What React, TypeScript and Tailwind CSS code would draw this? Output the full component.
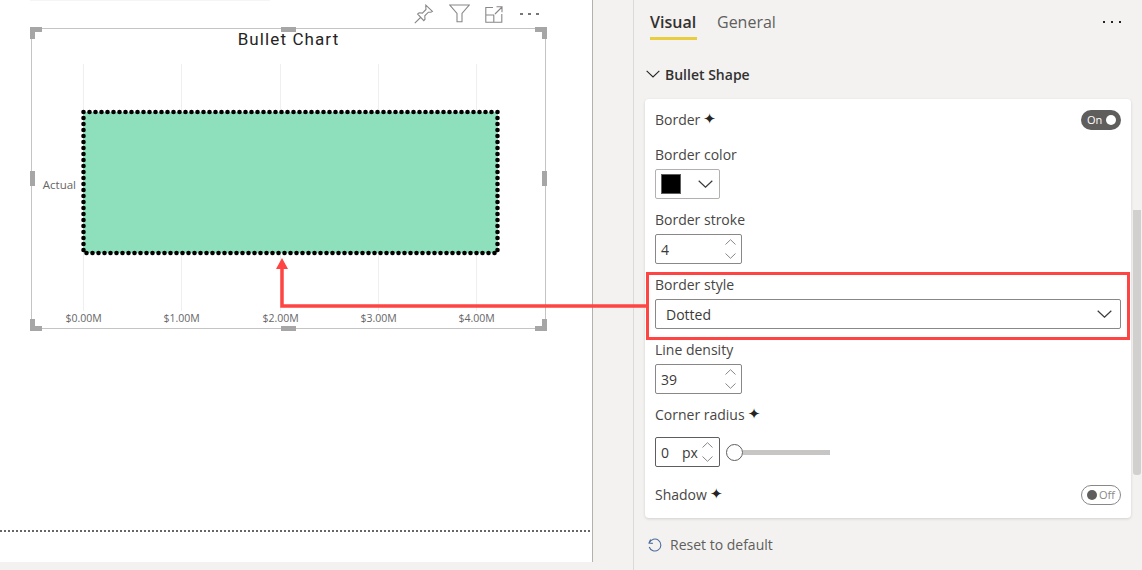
const FONT = "font-['Open_Sans','Noto_Sans',sans-serif]";

function Chevron({ w = 15, h = 8, color = "#3b3a39" }: { w?: number; h?: number; color?: string }) {
  return (
    <svg width={w} height={h} viewBox="0 0 15 8" fill="none" className="block">
      <path d="M.7.7 7.5 7.2 14.3.7" stroke={color} strokeWidth="1.2" />
    </svg>
  );
}

function SpinArrows() {
  return (
    <div className="flex flex-col items-center gap-[8px]">
      <svg width="11" height="6" viewBox="0 0 11 6" fill="none" className="block">
        <path d="M.5 5.5 5.5.7l5 4.8" stroke="#8a8886" />
      </svg>
      <svg width="11" height="6" viewBox="0 0 11 6" fill="none" className="block">
        <path d="M.5.5l5 4.8 5-4.8" stroke="#8a8886" />
      </svg>
    </div>
  );
}

function Star() {
  return <span className="font-['DejaVu_Sans',sans-serif] text-[15px] leading-none text-[#252423]">✦</span>;
}

function Label({ children }: { children: React.ReactNode }) {
  return <div className="flex h-5 items-center gap-[3px] pb-[2px] text-[14px] text-[#484644]">{children}</div>;
}

function NumberField({ value }: { value: string }) {
  return (
    <div className="mt-1 flex h-[30px] w-[87px] items-center justify-between rounded-[2px] border border-[#8a8886] pl-[5px] pr-[5px] text-[14px] text-[#3b3a39]">
      <span>{value}</span>
      <SpinArrows />
    </div>
  );
}

function Handle({ className }: { className: string }) {
  return <div className={`absolute bg-[#a6a6a6] ${className}`} />;
}

function Corner({ className, sides }: { className: string; sides: string }) {
  return <div className={`absolute h-3 w-3 border-[#a6a6a6] ${sides} ${className}`} />;
}

function Chart() {
  const ticks = [
    { x: 51, label: "$0.00M" },
    { x: 149, label: "$1.00M" },
    { x: 248, label: "$2.00M" },
    { x: 346, label: "$3.00M" },
    { x: 444, label: "$4.00M" },
  ];
  return (
    <svg width="513" height="299" viewBox="0 0 513 299" className="absolute left-0 top-0 block">
      {ticks.map((t) => (
        <line key={t.x} x1={t.x + 0.5} x2={t.x + 0.5} y1="35" y2="282" stroke="#efefef" />
      ))}
      <rect x="51.5" y="83" width="414" height="141" fill="#8de0bb" />
      <rect
        x="51.5"
        y="83"
        width="414"
        height="141"
        fill="none"
        stroke="#000"
        strokeWidth="4.6"
        strokeLinecap="round"
        strokeDasharray="0 6"
      />
      <text x="44" y="160" textAnchor="end" fontSize="11.5" fill="#666">Actual</text>
      {ticks.map((t) => (
        <text key={t.label} x={t.x + 0.5} y="293" textAnchor="middle" fontSize="10.5" fill="#666">{t.label}</text>
      ))}
    </svg>
  );
}

function ChartActions() {
  return (
    <div className="flex h-[27px] w-[515px] items-start justify-end pr-[7px] pt-[3px]">
      <svg width="20" height="20" viewBox="0 0 20 20" fill="none" stroke="#8a8886" strokeWidth="1.1" className="block">
        <path d="M.8 19.2 7 13M11.8 1.2l6.600 6.200-1.600.9-2.400-.1-3.600 3.600.2 3.400-1.200 1.400L3.600 10l1.500-1.200 3.300.3L12 5.500l-.2-2.600Z" />
      </svg>
      <svg width="21" height="19" viewBox="0 0 21 19" fill="none" stroke="#8a8886" strokeWidth="1.1" className="ml-[15px] block">
        <path d="M.8 1h19.400L13 9.500V17.800H8V9.500Z" />
      </svg>
      <svg width="18" height="17" viewBox="0 0 18 17" fill="none" stroke="#8a8886" strokeWidth="1.1" className="ml-[15px] mt-[2px] block">
        <path d="M8 1.500H.8v14.700h16V8M.8 9h8v7.200M10 8l7-7M11.500.8h5.500v5.500" />
      </svg>
      <div className="ml-[17px] mt-[9px] flex gap-[5px]">
        <span className="h-[2px] w-[3px] bg-[#777]" />
        <span className="h-[2px] w-[3px] bg-[#777]" />
        <span className="h-[2px] w-[3px] bg-[#777]" />
      </div>
    </div>
  );
}

function Canvas() {
  return (
    <div className="h-[562px] w-[593px] border-r border-[#b3b0ad] bg-white">
      <div className="ml-[30px] h-px w-[240px] bg-[#f5f5f5]" />
      <div className="ml-[31px]">
        <ChartActions />
        <div className="relative h-[301px] w-[515px] border border-[#c4c4c4]">
          <Chart />
          <div className="relative text-center font-['Roboto',sans-serif] text-[17px] leading-5 tracking-[1.1px] text-[#252423]">
            Bullet Chart
          </div>
          <Corner className="-left-[2px] -top-[2px]" sides="border-l-[5px] border-t-[5px]" />
          <Corner className="-right-[2px] -top-[2px]" sides="border-r-[5px] border-t-[5px]" />
          <Corner className="-left-[2px] -bottom-[3px]" sides="border-b-[5px] border-l-[5px]" />
          <Corner className="-bottom-[3px] -right-[2px]" sides="border-b-[5px] border-r-[5px]" />
          <Handle className="-top-[2px] left-[249px] h-[5px] w-[15px]" />
          <Handle className="-bottom-[3px] left-[249px] h-[5px] w-[15px]" />
          <Handle className="-left-[2px] top-[142px] h-[15px] w-[5px]" />
          <Handle className="-right-[2px] top-[142px] h-[15px] w-[5px]" />
        </div>
      </div>
      <div className="mt-[201px] h-0 w-[590px] border-t-2 border-dotted border-[#666]" />
    </div>
  );
}

function FormatPanel() {
  return (
    <div className="flex h-[570px] w-[509px] border-l border-[#dcdad8] bg-[#f3f2f1]">
      <div className="w-[498px]">
        <div className="flex h-[40px] items-start pl-[16px] pt-[11px] text-[16px] leading-[22px]">
          <div className="h-[29px] w-[47px] border-b-[3px] border-[#e8ce3f] font-semibold text-[#323130]">Visual</div>
          <div className="ml-[20px] text-[#605e5c]">General</div>
          <div className="ml-auto mr-[11px] mt-[10px] flex gap-[6px]">
            <span className="h-[2px] w-[2px] bg-[#252423]" />
            <span className="h-[2px] w-[2px] bg-[#252423]" />
            <span className="h-[2px] w-[2px] bg-[#252423]" />
          </div>
        </div>

        <div className="flex h-[59px] items-center gap-[5px] pl-[12px] pt-[9px] text-[14px] font-semibold text-[#323130]">
          <Chevron w={14} h={8} color="#252423" />
          Bullet Shape
        </div>

        <div className="ml-[11px] h-[419px] w-[486px] rounded-[4px] bg-white px-[10px] pt-[11px] shadow-[0_1px_3px_rgba(0,0,0,0.14)]">
          <div className="flex h-5 items-center justify-between">
            <Label>Border <Star /></Label>
            <div className="flex h-5 w-10 items-center justify-between rounded-full bg-[#605e5c] pl-[6px] pr-[5px] text-[11px] text-white">
              On
              <span className="h-[10px] w-[10px] rounded-full bg-white" />
            </div>
          </div>

          <div className="mt-[15px]">
            <Label>Border color</Label>
            <div className="mt-1 flex h-[30px] w-[65px] items-center justify-between rounded-[2px] border border-[#b3b0ad] pl-[5px] pr-[6px]">
              <span className="h-5 w-5 border border-[#605e5c] bg-black" />
              <Chevron />
            </div>
          </div>

          <div className="mt-[11px]">
            <Label>Border stroke</Label>
            <NumberField value="4" />
          </div>

          <div className="mt-[11px]">
            <Label>Border style</Label>
            <div className="mt-1 flex h-[30px] w-[466px] items-center justify-between rounded-[2px] border border-[#8a8886] pl-[10px] pr-[8px] text-[14px] text-[#3b3a39]">
              Dotted
              <Chevron />
            </div>
          </div>

          <div className="mt-[11px]">
            <Label>Line density</Label>
            <NumberField value="39" />
          </div>

          <div className="mt-[11px]">
            <Label>Corner radius <Star /></Label>
            <div className="mt-[12px] flex items-center">
              <div className="flex h-[30px] w-[65px] items-center rounded-[2px] border border-[#605e5c] pl-[5px] text-[14px] text-[#3b3a39]">
                <span className="w-[21px]">0</span>
                <span className="w-[20px]">px</span>
                <SpinArrows />
              </div>
              <span className="ml-[6px] h-[17px] w-[17px] rounded-full border border-[#605e5c] bg-white" />
              <span className="h-[5px] w-[87px] bg-[#c8c6c4]" />
            </div>
          </div>

          <div className="mt-[18px] flex h-5 items-center justify-between">
            <Label>Shadow <Star /></Label>
            <div className="flex h-5 w-10 items-center gap-[2px] rounded-full border border-[#8a8886] pl-[5px] text-[11px] text-[#8a8886]">
              <span className="h-[10px] w-[10px] rounded-full bg-[#605e5c]" />
              Off
            </div>
          </div>
        </div>

        <div className="flex h-[52px] items-center gap-[7px] pl-[13px] pt-[1px] text-[14px] text-[#605e5c]">
          <svg width="16" height="16" viewBox="0 0 16 16" fill="none" stroke="#4a6a9c" strokeWidth="1.1" className="block">
            <path d="M3.600 2.500 2 6l3.800.4M2.300 5.800A6 6 0 1 1 2.200 10" />
          </svg>
          Reset to default
        </div>
      </div>
      <div className="ml-[1px] w-[8px]">
        <div className="mt-[210px] h-[265px] rounded-b-[3px] bg-[#d2d0ce]" />
      </div>
    </div>
  );
}

export default function App() {
  return (
    <div className={`relative flex h-[570px] w-[1142px] overflow-hidden bg-[#f3f2f1] ${FONT}`}>
      <div className="w-[633px]">
        <Canvas />
      </div>
      <FormatPanel />
      {/* red callout drawn over the screenshot */}
      <svg width="1142" height="570" viewBox="0 0 1142 570" fill="none" className="pointer-events-none absolute left-0 top-0">
        <path d="M646 306H282V268" stroke="#ff4444" strokeWidth="3.500" />
        <path d="M282 258l6 11h-12Z" fill="#ff4444" />
        <rect x="647.500" y="273.500" width="481" height="65" stroke="#ff4444" strokeWidth="3" />
      </svg>
    </div>
  );
}
